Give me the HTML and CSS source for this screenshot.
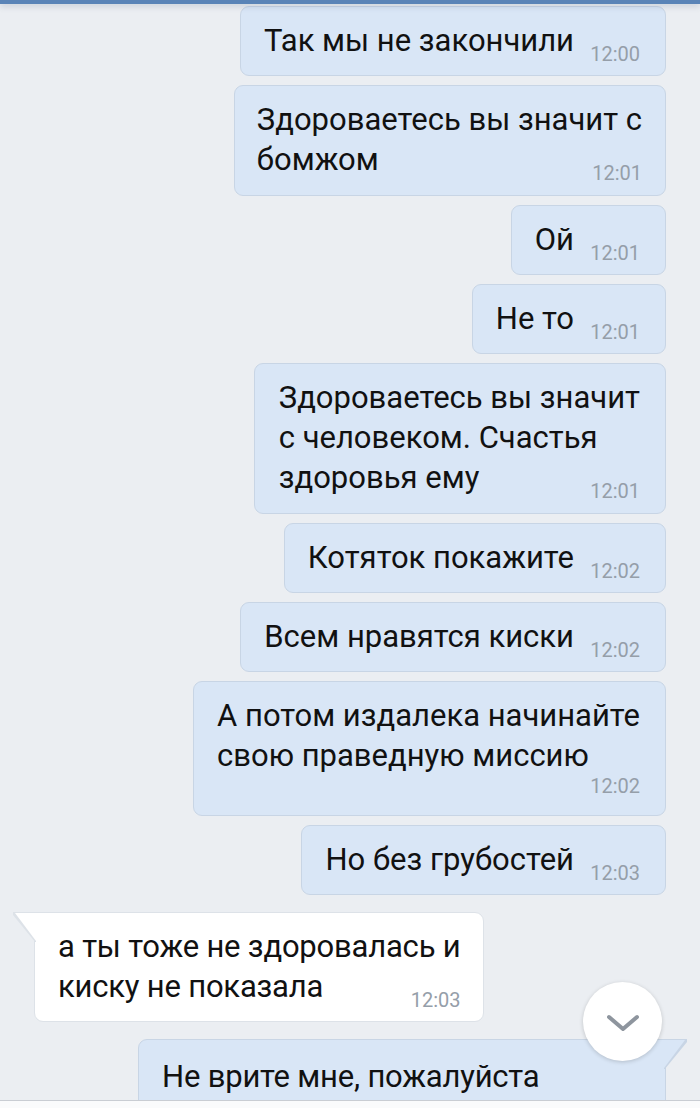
FILE: index.html
```html
<!DOCTYPE html>
<html lang="ru">
<head>
<meta charset="utf-8">
<link rel="stylesheet" href="styles.css">
</head>
<body>
<div class="screen">
  <div class="topbar"></div>
  <div class="chat">
    <div class="msg out"><span class="text">Так мы не закончили<span class="spacer"></span></span><span class="time">12:00</span></div>
    <div class="msg out multi w2"><span class="text">Здороваетесь вы значит с<br>бомжом<span class="spacer"></span></span><span class="time">12:01</span></div>
    <div class="msg out"><span class="text">Ой<span class="spacer"></span></span><span class="time">12:01</span></div>
    <div class="msg out"><span class="text">Не то<span class="spacer"></span></span><span class="time">12:01</span></div>
    <div class="msg out multi w5"><span class="text">Здороваетесь вы значит<br>с человеком. Счастья<br>здоровья ему<span class="spacer"></span></span><span class="time">12:01</span></div>
    <div class="msg out"><span class="text">Котяток покажите<span class="spacer"></span></span><span class="time">12:02</span></div>
    <div class="msg out"><span class="text">Всем нравятся киски<span class="spacer"></span></span><span class="time">12:02</span></div>
    <div class="msg out stacked"><span class="text">А потом издалека начинайте<br>свою праведную миссию</span><span class="time">12:02</span></div>
    <div class="msg out"><span class="text">Но без грубостей<span class="spacer"></span></span><span class="time">12:03</span></div>
    <div class="msg in tail-left"><span class="text">а ты тоже не здоровалась и<br>киску не показала<span class="spacer"></span></span><span class="time">12:03</span></div>
    <div class="msg out tail-right last"><span class="text">Не врите мне, пожалуйста</span></div>
  </div>
  <div class="composer"></div>
  <button class="scroll-down" aria-label="Вниз">
    <svg width="34" height="20" viewBox="0 0 34 20"><path d="M3 3 L17 15 L31 3" fill="none" stroke="#8e959e" stroke-width="4" stroke-linecap="round" stroke-linejoin="round"/></svg>
  </button>
</div>
</body>
</html>
```

FILE: styles.css
```css
* { box-sizing: border-box; }
html, body { margin: 0; padding: 0; }
body {
  font-family: Roboto, "Noto Sans", "Liberation Sans", sans-serif;
  background: #ebeef2;
  color: #111;
}
.screen {
  position: relative;
  width: 700px;
  height: 1108px;
  overflow: hidden;
  display: flex;
  flex-direction: column;
  background: #ebeef2;
}
.topbar {
  height: 4px;
  flex: none;
  background: #5a84b7;
  box-shadow: 0 2px 6px rgba(60, 80, 110, 0.25);
  position: relative;
  z-index: 2;
}
.chat {
  flex: 1;
  min-height: 0;
  overflow: hidden;
  display: flex;
  flex-direction: column;
  padding: 2px 34px 0 34px;
  gap: 9px;
}
.msg {
  position: relative;
  display: grid;
  padding: 14px 25px 14px 23px;
  font-size: 31px;
  line-height: 40px;
  border-radius: 9px;
  flex: none;
  white-space: nowrap;
}
.msg > .text, .msg > .time { grid-area: 1 / 1; }
.out {
  align-self: flex-end;
  background: #d9e6f6;
  border: 1px solid #c8d5e5;
}
.in {
  align-self: flex-start;
  background: #ffffff;
  border: 1px solid #dde2e8;
  margin-top: 8px;
  letter-spacing: -0.2px;
  padding-right: 23px;
}
.in + .out { margin-top: 8px; }
.spacer {
  display: inline-block;
  width: 66px;
  height: 1px;
}
.time {
  align-self: end;
  justify-self: end;
  font-size: 20px;
  line-height: 24px;
  color: #959ea9;
  margin-bottom: -5px;
  letter-spacing: 0;
}
.multi { padding-bottom: 15px; }
.w2 { padding-left: 22px; padding-right: 23px; }
.w5 { padding-left: 24px; }
.stacked { display: flex; flex-direction: column; padding-bottom: 17px; }
.stacked .time { align-self: flex-end; margin-bottom: 0; margin-top: -2px; }
.tail-left { border-top-left-radius: 0; }
.tail-left::before {
  content: "";
  position: absolute;
  top: -1px;
  left: -22px;
  width: 23px;
  height: 30px;
  background: #dde2e8;
  clip-path: polygon(0 0, 100% 0, 100% 100%, 96% 100%, 0 3px);
}
.tail-left::after {
  content: "";
  position: absolute;
  top: 0;
  left: -20px;
  width: 21px;
  height: 28px;
  background: #ffffff;
  clip-path: polygon(0 0, 100% 0, 100% 100%);
}
.tail-right { border-top-right-radius: 0; padding-top: 17px; padding-bottom: 30px; }
.last { width: 528px; letter-spacing: -0.2px; }
.tail-right::before {
  content: "";
  position: absolute;
  top: -1px;
  right: -22px;
  width: 23px;
  height: 30px;
  background: #c8d5e5;
  clip-path: polygon(0 0, 100% 0, 100% 3px, 4% 100%, 0 100%);
}
.tail-right::after {
  content: "";
  position: absolute;
  top: 0;
  right: -20px;
  width: 21px;
  height: 28px;
  background: #d9e6f6;
  clip-path: polygon(0 0, 100% 0, 0 100%);
}
.composer {
  flex: none;
  height: 8px;
  background: #fafbfc;
  border-top: 1px solid #c9cdd3;
  position: relative;
  z-index: 2;
}
.scroll-down {
  position: absolute;
  left: 583px;
  top: 982px;
  width: 79px;
  height: 79px;
  border-radius: 50%;
  border: none;
  background: #ffffff;
  box-shadow: 0 1px 4px rgba(0, 0, 0, 0.18);
  display: flex;
  align-items: center;
  justify-content: center;
  padding: 0;
  padding-top: 4px;
  z-index: 3;
}
```
